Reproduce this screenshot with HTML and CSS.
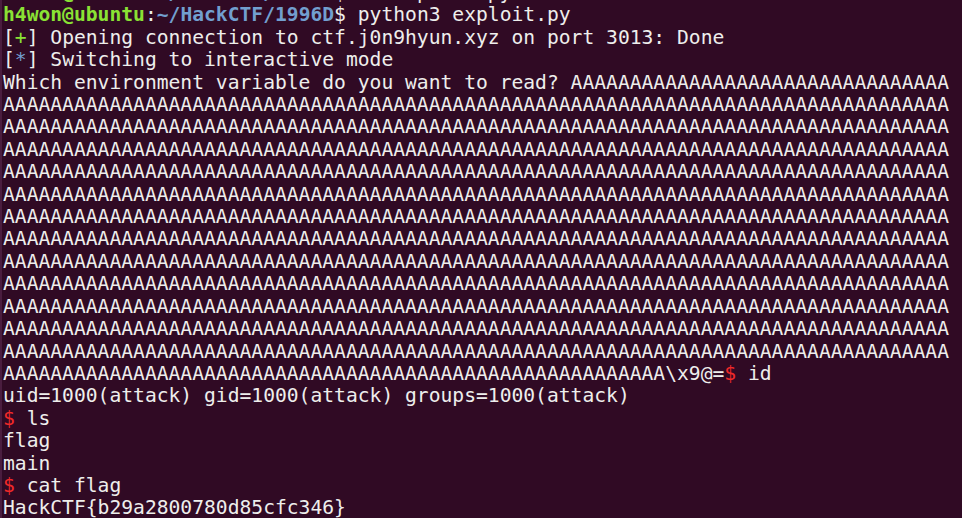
FILE: index.html
```html
<!DOCTYPE html>
<html>
<head>
<meta charset="utf-8">
<link rel="stylesheet" href="styles.css">
</head>
<body>
<div class="term">
<div class="screen">
<div class="line"><span class="user">h4won@ubuntu</span>:<span class="path">~/HackCTF/1996D</span>$ vi exploit.py</div>
<div class="line"><span class="user">h4won@ubuntu</span>:<span class="path">~/HackCTF/1996D</span>$ python3 exploit.py</div>
<div class="line">[<span class="plus">+</span>] Opening connection to ctf.j0n9hyun.xyz on port 3013: Done</div>
<div class="line">[<span class="star">*</span>] Switching to interactive mode</div>
<div class="line">Which environment variable do you want to read? AAAAAAAAAAAAAAAAAAAAAAAAAAAAAAAA</div>
<div class="line">AAAAAAAAAAAAAAAAAAAAAAAAAAAAAAAAAAAAAAAAAAAAAAAAAAAAAAAAAAAAAAAAAAAAAAAAAAAAAAAA</div>
<div class="line">AAAAAAAAAAAAAAAAAAAAAAAAAAAAAAAAAAAAAAAAAAAAAAAAAAAAAAAAAAAAAAAAAAAAAAAAAAAAAAAA</div>
<div class="line">AAAAAAAAAAAAAAAAAAAAAAAAAAAAAAAAAAAAAAAAAAAAAAAAAAAAAAAAAAAAAAAAAAAAAAAAAAAAAAAA</div>
<div class="line">AAAAAAAAAAAAAAAAAAAAAAAAAAAAAAAAAAAAAAAAAAAAAAAAAAAAAAAAAAAAAAAAAAAAAAAAAAAAAAAA</div>
<div class="line">AAAAAAAAAAAAAAAAAAAAAAAAAAAAAAAAAAAAAAAAAAAAAAAAAAAAAAAAAAAAAAAAAAAAAAAAAAAAAAAA</div>
<div class="line">AAAAAAAAAAAAAAAAAAAAAAAAAAAAAAAAAAAAAAAAAAAAAAAAAAAAAAAAAAAAAAAAAAAAAAAAAAAAAAAA</div>
<div class="line">AAAAAAAAAAAAAAAAAAAAAAAAAAAAAAAAAAAAAAAAAAAAAAAAAAAAAAAAAAAAAAAAAAAAAAAAAAAAAAAA</div>
<div class="line">AAAAAAAAAAAAAAAAAAAAAAAAAAAAAAAAAAAAAAAAAAAAAAAAAAAAAAAAAAAAAAAAAAAAAAAAAAAAAAAA</div>
<div class="line">AAAAAAAAAAAAAAAAAAAAAAAAAAAAAAAAAAAAAAAAAAAAAAAAAAAAAAAAAAAAAAAAAAAAAAAAAAAAAAAA</div>
<div class="line">AAAAAAAAAAAAAAAAAAAAAAAAAAAAAAAAAAAAAAAAAAAAAAAAAAAAAAAAAAAAAAAAAAAAAAAAAAAAAAAA</div>
<div class="line">AAAAAAAAAAAAAAAAAAAAAAAAAAAAAAAAAAAAAAAAAAAAAAAAAAAAAAAAAAAAAAAAAAAAAAAAAAAAAAAA</div>
<div class="line">AAAAAAAAAAAAAAAAAAAAAAAAAAAAAAAAAAAAAAAAAAAAAAAAAAAAAAAAAAAAAAAAAAAAAAAAAAAAAAAA</div>
<div class="line">AAAAAAAAAAAAAAAAAAAAAAAAAAAAAAAAAAAAAAAAAAAAAAAAAAAAAAAA\x9@=<span class="dollar">$</span> id</div>
<div class="line">uid=1000(attack) gid=1000(attack) groups=1000(attack)</div>
<div class="line"><span class="dollar">$</span> ls</div>
<div class="line">flag</div>
<div class="line">main</div>
<div class="line"><span class="dollar">$</span> cat flag</div>
<div class="line">HackCTF{b29a2800780d85cfc346}</div>
</div>
</div>
</body>
</html>
```
FILE: styles.css
```css
html, body {
  margin: 0;
  padding: 0;
  background: #300a24;
  overflow: hidden;
}
.term {
  width: 962px;
  height: 518px;
  overflow: hidden;
  background: #300a24;
  border-left: 2px solid #4a1d3f;
  box-sizing: border-box;
}
.screen {
  display: flex;
  flex-direction: column;
  margin: -18px 0 0 1px;
  font-family: "DejaVu Sans Mono", "Liberation Mono", monospace;
  font-size: 19.65px;
  line-height: 22.41px;
  color: #eeeeec;
}
.line {
  white-space: pre;
  height: 22.41px;
}
.user {
  color: #8ae234;
  font-weight: bold;
}
.path {
  color: #729fcf;
  font-weight: bold;
}
.plus {
  color: #8ae234;
}
.star {
  color: #729fcf;
}
.dollar {
  color: #ef2929;
}
```
